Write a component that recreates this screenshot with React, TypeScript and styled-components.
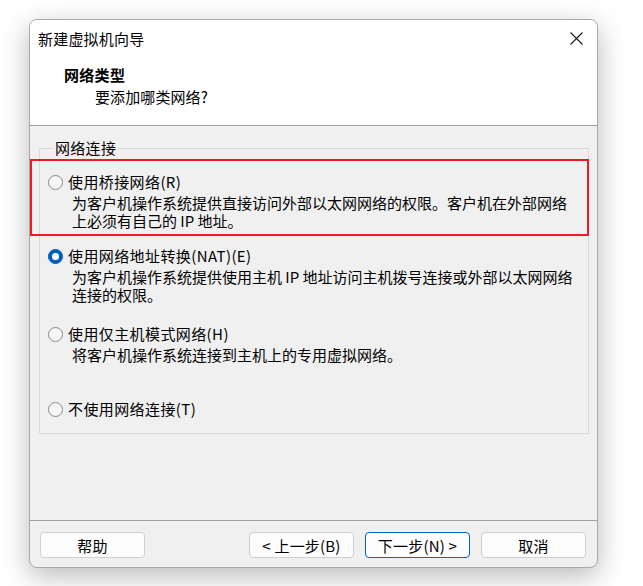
import styled, { createGlobalStyle } from "styled-components"

const GlobalStyle = createGlobalStyle`
  html, body {
    margin: 0;
    padding: 0;
    background: #ffffff;
  }
  body {
    font-family: "Noto Sans CJK SC", "Noto Sans", sans-serif;
    color: #000;
  }
`

const Page = styled.div`
  padding: 19px 0 0 29px;
  height: 586px;
  box-sizing: border-box;
`

const Window = styled.div`
  width: 569px;
  height: 549px;
  box-sizing: border-box;
  border: 1px solid #a9a9a9;
  border-radius: 8px;
  background: #f0f0f0;
  box-shadow: 0 8px 28px rgba(0, 0, 0, 0.28);
  display: flex;
  flex-direction: column;
  overflow: hidden;
`

const TitleBar = styled.div`
  height: 36px;
  background: #fff;
  display: flex;
  align-items: center;
  justify-content: space-between;
  padding: 0 14px 0 8px;
  font-size: 15px;
  letter-spacing: 0.2px;
`

const CloseButton = styled.div`
  width: 14px;
  height: 14px;
  display: flex;
  align-items: center;
  justify-content: center;
`

const Header = styled.div`
  height: 70px;
  background: #fff;
  border-bottom: 1px solid #a0a0a0;
  padding: 9px 0 0 34px;
  box-sizing: border-box;
`

const Heading = styled.div`
  font-size: 15px;
  font-weight: bold;
  line-height: 20px;
  letter-spacing: 0.3px;
`

const SubHeading = styled.div`
  font-size: 15px;
  line-height: 20px;
  margin: 2px 0 0 31px;
  letter-spacing: 0.1px;
`

const Body = styled.div`
  flex: 1;
  padding: 13px 8px 0 9px;
  min-width: 0;
`

const Group = styled.fieldset`
  margin: 0;
  min-width: 0;
  min-inline-size: 0;
  border: 1px solid #dadada;
  border-radius: 1px;
  padding: 15px 10px 14px 8px;
  font-size: 15px;
`

const Legend = styled.legend`
  padding: 0 2px;
  margin-left: 5px;
  line-height: 18px;
  letter-spacing: 0.3px;
`

const Option = styled.div<{ $top: number }>`
  position: relative;
  margin-top: ${(p) => p.$top}px;
`

const Highlight = styled.div`
  position: absolute;
  top: -13px;
  left: -18px;
  right: -11px;
  bottom: -6px;
  border: 2px solid #ed1c24;
  pointer-events: none;
`

const OptionTitle = styled.div`
  display: flex;
  align-items: center;
  gap: 5px;
  height: 20px;
  line-height: 20px;
  letter-spacing: 0.4px;
  white-space: nowrap;
`

const Radio = styled.span<{ $checked?: boolean }>`
  width: 15px;
  height: 15px;
  box-sizing: border-box;
  border-radius: 50%;
  flex: none;
  display: flex;
  align-items: center;
  justify-content: center;
  background: ${(p) => (p.$checked ? "#005fb8" : "#f7f7f7")};
  border: 1px solid ${(p) => (p.$checked ? "#005fb8" : "#8a8a8a")};

  &::after {
    content: "";
    display: ${(p) => (p.$checked ? "block" : "none")};
    width: 7px;
    height: 7px;
    border-radius: 50%;
    background: #fff;
  }
`

const Description = styled.div`
  margin-top: 2px;
  padding-left: 24px;
  line-height: 18px;
  letter-spacing: 0;
  white-space: nowrap;
`

const Footer = styled.div`
  border-top: 1px solid #a0a0a0;
  padding: 11px 11px 9px 10px;
  display: flex;
  align-items: center;
  gap: 11px;
`

const Spacer = styled.div`
  flex: 1;
`

const Button = styled.div<{ $primary?: boolean }>`
  width: 105px;
  height: 26px;
  box-sizing: border-box;
  border-radius: 4px;
  background: #fdfdfd;
  border: 1px solid ${(p) => (p.$primary ? "#0067c0" : "#d0d0d0")};
  display: flex;
  align-items: center;
  justify-content: center;
  font-size: 15px;
  letter-spacing: 0.2px;
  white-space: pre;
`

export default function App() {
  return (
    <Page>
      <GlobalStyle />
      <Window>
        <TitleBar>
          <span>新建虚拟机向导</span>
          <CloseButton>
            <svg width="13" height="13" viewBox="0 0 13 13">
              <path d="M0.5 0.5 L12.5 12.5 M12.5 0.5 L0.5 12.5" stroke="#1a1a1a" strokeWidth="1.1" />
            </svg>
          </CloseButton>
        </TitleBar>
        <Header>
          <Heading>网络类型</Heading>
          <SubHeading>要添加哪类网络?</SubHeading>
        </Header>
        <Body>
          <Group>
            <Legend>网络连接</Legend>
            <Option $top={0}>
              <Highlight />
              <OptionTitle>
                <Radio />
                使用桥接网络(R)
              </OptionTitle>
              <Description>
                为客户机操作系统提供直接访问外部以太网网络的权限。客户机在外部网络
                <br />
                上必须有自己的 IP 地址。
              </Description>
            </Option>
            <Option $top={16}>
              <OptionTitle>
                <Radio $checked />
                使用网络地址转换(NAT)(E)
              </OptionTitle>
              <Description>
                为客户机操作系统提供使用主机 IP 地址访问主机拨号连接或外部以太网网络
                <br />
                连接的权限。
              </Description>
            </Option>
            <Option $top={20}>
              <OptionTitle>
                <Radio />
                使用仅主机模式网络(H)
              </OptionTitle>
              <Description>将客户机操作系统连接到主机上的专用虚拟网络。</Description>
            </Option>
            <Option $top={35}>
              <OptionTitle>
                <Radio />
                不使用网络连接(T)
              </OptionTitle>
            </Option>
          </Group>
        </Body>
        <Footer>
          <Button>帮助</Button>
          <Spacer />
          <Button>{"< 上一步(B)"}</Button>
          <Button $primary>{"下一步(N) >"}</Button>
          <Button>取消</Button>
        </Footer>
      </Window>
    </Page>
  )
}
